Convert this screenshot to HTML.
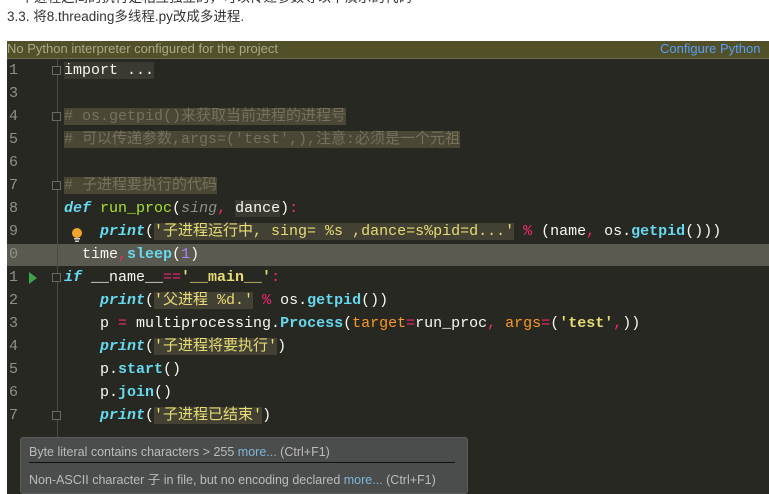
<!DOCTYPE html>
<html><head><meta charset="utf-8"><style>
body{margin:0;width:769px;height:494px;background:#fff;position:relative;overflow:hidden;font-family:"Liberation Sans","Noto Sans CJK SC",sans-serif}
.top{position:absolute;left:7px;top:5px;font-size:13.5px;color:#333}
.top0{position:absolute;left:7px;top:-14px;font-size:13.5px;color:#333}
.banner{position:absolute;left:7px;top:41px;width:762px;height:17px;background:#525029;border-bottom:1px solid #6b6a50;font-size:13px;color:#a9a98a;line-height:16px}
.banner .cfg{position:absolute;left:653px;color:#589df6}
.ed{position:absolute;left:7px;top:59px;width:762px;height:435px;background:#272822}
.gut{position:absolute;left:57px;top:59px;width:1px;height:380px;background:#4a4a45}
.ln{position:absolute;left:9px;font:15px "Liberation Mono",monospace;color:#90908a;line-height:23px}
.code{position:absolute;left:64px;font:15px "Liberation Mono","Noto Sans CJK SC",monospace;color:#f8f8f2;line-height:23px;white-space:pre}
.cm{color:#75715e;background:#4a4735}
.kw{color:#66d9ef;font-style:italic;font-weight:bold}
.fn{color:#a6e22e}
.par{color:#90908a;font-style:italic}
.str{color:#e6db74;background:#434133}
.sb{color:#e6db74;font-weight:bold}
.op{color:#f92672}
.bi{color:#66d9ef;font-weight:bold}
.num{color:#ae81ff}
.arg{color:#fd971f}
.hl{position:absolute;left:7px;top:244px;width:762px;height:22px;background:#5a5a50}
.tip{position:absolute;left:20px;top:437px;width:446px;height:55px;background:#4b4d4d;border:1px solid #5a5c5c;border-radius:3px;font-size:12.5px;color:#bbb}
.tip .a{position:absolute;left:8px;top:7px}
.tip .b{position:absolute;left:8px;top:31px}
.tip .sep{position:absolute;left:8px;right:12px;top:24px;height:1px;background:#111}
.tip i{font-style:normal;color:#7fb5d5}
.fold{position:absolute;left:52px;width:9px;height:9px;border:1px solid #6a6a62;box-sizing:border-box;background:#272822}
</style></head><body>
<div class="top0">一个进程之间的执行是相互独立的，可以传递参数等以下演示的代码</div>
<div class="top">3.3. 将8.threading多线程.py改成多进程.</div>
<div class="banner"><span>No Python interpreter configured for the project</span><span class="cfg">Configure Python in</span></div>
<div class="ed"></div>
<div class="hl"></div>
<div class="gut"></div>
<div class="fold" style="top:66px"></div>
<div class="fold" style="top:112px"></div>
<div class="fold" style="top:181px"></div>
<div class="fold" style="top:273px"></div>
<div class="fold" style="top:411px"></div>
<svg style="position:absolute;left:28px;top:272px" width="10" height="12"><path d="M1 0L9 6L1 12Z" fill="#3fa34d"/></svg>
<svg style="position:absolute;left:71px;top:227px" width="12" height="16"><circle cx="6" cy="6" r="5" fill="#f0a52a"/><rect x="3" y="11" width="6" height="1.5" fill="#ccc"/><rect x="4" y="13.5" width="4" height="1.5" fill="#ccc"/></svg>
<div class="ln" style="top:59px">1<br>3<br>4<br>5<br>6<br>7<br>8<br>9<br>0<br>1<br>2<br>3<br>4<br>5<br>6<br>7</div>
<div class="code" style="top:59px"><span style="background:#3b3a32">import ...</span>

<span class="cm"># os.getpid()来获取当前进程的进程号</span>
<span class="cm"># 可以传递参数,args=('test',),注意:必须是一个元祖</span>

<span class="cm"># 子进程要执行的代码</span>
<span class="kw">def</span> <span class="fn">run_proc</span>(<span class="par">sing</span><span class="op">,</span> <span style="background:#3b3a32">dance</span>)<span class="op">:</span>
    <span class="kw">print</span>(<span class="str">'子进程运行中, sing= %s ,dance=s%pid=d...'</span> <span class="op">%</span> (name<span class="op">,</span> os.<span class="bi">getpid</span>()))
  time<span class="op">,</span><span class="bi">sleep</span>(<span class="num">1</span>)
<span class="kw">if</span> __name__<span class="op">==</span><span class="sb">'__main__'</span><span class="op">:</span>
    <span class="kw">print</span>(<span class="str">'父进程 %d.'</span> <span class="op">%</span> os.<span class="bi">getpid</span>())
    p <span class="op">=</span> multiprocessing.<span class="bi">Process</span>(<span class="arg">target</span><span class="op">=</span>run_proc<span class="op">,</span> <span class="arg">args</span><span class="op">=</span>(<span class="sb">'test'</span><span class="op">,</span>))
    <span class="kw">print</span>(<span class="str">'子进程将要执行'</span>)
    p.<span class="bi">start</span>()
    p.<span class="bi">join</span>()
    <span class="kw">print</span>(<span class="str">'子进程已结束'</span>)</div>
<div class="tip"><div class="a">Byte literal contains characters &gt; 255 <i>more...</i> (Ctrl+F1)</div><div class="sep"></div><div class="b">Non-ASCII character 子 in file, but no encoding declared <i>more...</i> (Ctrl+F1)</div></div>
</body></html>
